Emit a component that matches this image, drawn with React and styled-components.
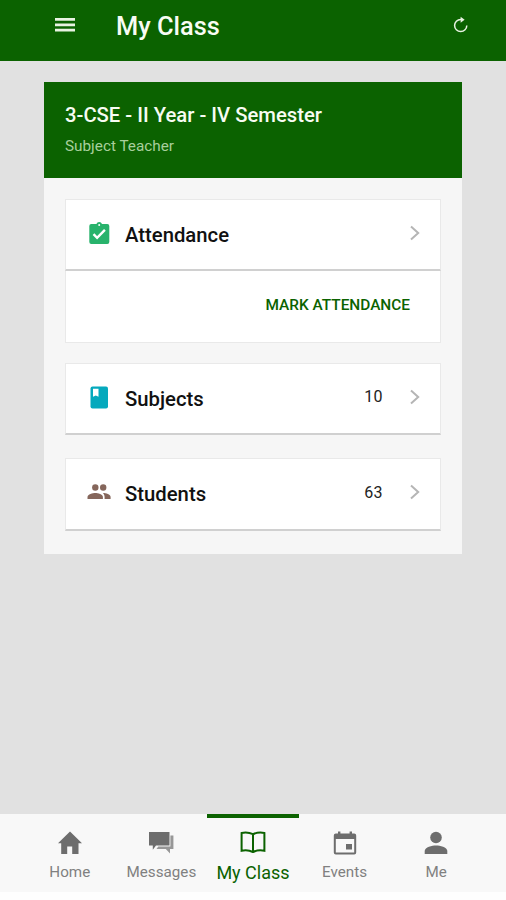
import React from 'react';
import styled, { createGlobalStyle } from 'styled-components';

const GlobalStyle = createGlobalStyle`
  * {
    box-sizing: border-box;
  }
  body {
    margin: 0;
    background: #fefefe;
    font-family: Roboto, sans-serif;
  }
`;

const Screen = styled.div`
  width: 506px;
  height: 900px;
  display: flex;
  flex-direction: column;
  overflow: hidden;
  svg {
    display: block;
    flex: none;
  }
`;

const Toolbar = styled.header`
  flex: none;
  height: 61px;
  padding: 0 37px 11px 54px;
  display: flex;
  align-items: center;
  background: #0b6200;
  color: #e9f3e2;
`;

const Title = styled.h1`
  flex: 1;
  margin: 2px 0 0 40px;
  font-size: 25.4px;
  line-height: 30px;
  font-weight: 500;
  color: #f8fcf3;
`;

const Content = styled.main`
  flex: 1;
  padding: 21px 44px 0;
  background: #e1e1e1;
`;

const ClassCard = styled.section`
  height: 472px;
  background: #f6f6f6;
`;

const ClassHeader = styled.div`
  height: 96px;
  padding: 20px 21px 0;
  background: #0b6200;
`;

const ClassName = styled.h2`
  margin: 0;
  font-size: 20.25px;
  line-height: 26px;
  font-weight: 500;
  color: #f8fcf3;
`;

const Role = styled.p`
  margin: 8px 0 0;
  font-size: 15.3px;
  line-height: 20px;
  color: #a8cf9c;
`;

const List = styled.div`
  padding: 21px 21px 0;
`;

const Item = styled.div`
  height: ${({ $height }) => $height || 72}px;
  margin-bottom: ${({ $gap }) => $gap}px;
  padding: 0 20px 4px 21px;
  display: flex;
  align-items: center;
  background: #fff;
  border: 1px solid #e9e9e9;
  border-bottom: 2px solid #d0d0d0;
`;

const Label = styled.span`
  flex: 1;
  margin: 4px 0 0 14px;
  font-size: 20.3px;
  font-weight: 500;
  color: #111;
`;

const Count = styled.span`
  margin-right: 27px;
  font-size: 16px;
  letter-spacing: 0.4px;
  color: #222;
`;

const Actions = styled.div`
  height: 72px;
  margin-bottom: 20px;
  padding: 0 30px 4px;
  display: flex;
  align-items: center;
  justify-content: flex-end;
  background: #fff;
  border: 1px solid #e9e9e9;
  border-top: 0;
`;

const MarkButton = styled.button`
  padding: 1px 0 0;
  border: 0;
  background: none;
  font: 500 15.4px Roboto, sans-serif;
  color: #0b6200;
`;

const TabBar = styled.nav`
  flex: none;
  height: 78px;
  margin-bottom: 8px;
  padding: 0 24px;
  display: grid;
  grid-template-columns: repeat(5, 1fr);
  background: #f8f8f8;
`;

const Tab = styled.div`
  padding-top: 12px;
  display: flex;
  flex-direction: column;
  align-items: center;
  border-top: 4px solid ${({ $active }) => ($active ? '#0b6200' : 'transparent')};
  color: ${({ $active }) => ($active ? '#0b6200' : '#6d6d6d')};
`;

const TabLabel = styled.span`
  margin-top: ${({ $active }) => ($active ? 6 : 5)}px;
  font-size: ${({ $active }) => ($active ? 18 : 15.2)}px;
  line-height: 22px;
  white-space: nowrap;
  color: ${({ $active }) => ($active ? '#0b6200' : '#808080')};
`;

const MenuIcon = () => (
  <svg width="22" height="16" viewBox="0 0 22 16" fill="currentColor">
    <path d="M1 1h20v2.8H1zM1 6.4h20v2.8H1zM1 11.8h20v2.8H1z" />
  </svg>
);

const RefreshIcon = () => (
  <svg width="16" height="18" viewBox="0 0 16 18" fill="none" stroke="currentColor" strokeWidth="1.5">
    <path d="M13.8 9.500A6.100 6.100 0 1 1 7.700 3.400h2" />
    <path d="M7.600 .8l4 2.900-4 3.100z" fill="currentColor" stroke="none" />
  </svg>
);

const ChevronIcon = () => (
  <svg width="10" height="16" viewBox="0 0 10 16" fill="none" stroke="#b5b5b5" strokeWidth="2">
    <path d="M1 1.5L8.2 8 1 14.5" />
  </svg>
);

const AttendanceIcon = () => (
  <svg width="24" height="24" viewBox="0 0 24 24">
    <path
      fill="#28b36c"
      d="M20.3 3h-5.300a3 3 0 0 0-5.600 0H4.300a2 2 0 0 0-2 2v16a2 2 0 0 0 2 2h16a2 2 0 0 0 2-2V5a2 2 0 0 0-2-2z"
    />
    <circle cx="12.2" cy="4" r="1" fill="#fff" />
    <path d="M6.500 13.200l3.600 3.600 7.800-8" fill="none" stroke="#fff" strokeWidth="2.4" />
  </svg>
);

const SubjectsIcon = () => (
  <svg width="24" height="24" viewBox="0 0 24 24">
    <rect x="3.5" y="1.500" width="17.500" height="22" rx="2" fill="#05a9bd" />
    <path d="M6 3.800h5.500v8L8.800 10.600 6 11.800z" fill="#fff" />
  </svg>
);

const StudentsIcon = () => (
  <svg width="24" height="24" viewBox="0 0 24 24" fill="#85665b">
    <circle cx="8.3" cy="7.5" r="3.2" />
    <circle cx="16.2" cy="7.5" r="3.2" />
    <path d="M.5 19v-2.1c0-2.6 5.3-4 7.8-4s7.6 1.4 7.6 4V19z" />
    <path d="M15.9 12.9c3 .1 7.7 1.4 7.7 4V19h-6v-2.1c0-1.8-.8-3-1.7-4z" />
  </svg>
);

const HomeIcon = () => (
  <svg width="28" height="26" viewBox="0 0 28 26" fill="currentColor">
    <path d="M14 1.5L2 13.3h3.200V24h6v-7.500h5V24h6.300V13.300H26z" />
  </svg>
);

const MessagesIcon = () => (
  <svg width="28" height="26" viewBox="0 0 28 26" fill="currentColor">
    <path d="M2 2h20.5v13.500H9l-3.200 4.200v-4.200H2z" />
    <path d="M23.400 5.500h3V19H23v4.500L18.800 19H9.500l1.800-2.500h12.100z" opacity=".7" />
  </svg>
);

const BookIcon = () => (
  <svg width="28" height="26" viewBox="0 0 28 26" fill="none" stroke="currentColor" strokeWidth="2">
    <path d="M14 4.2C10.3 2.5 6 2.3 2.6 3v17.7c3.6-.8 7.8-.5 11.4 1.3 3.6-1.8 7.8-2.1 11.4-1.3V3C22 2.3 17.7 2.5 14 4.2zM14 4.2V22" />
  </svg>
);

const EventsIcon = () => (
  <svg width="28" height="26" viewBox="0 0 28 26" fill="currentColor">
    <path
      fillRule="evenodd"
      d="M7 1.5h2.4v2h9.2v-2H21v2h2.2a2 2 0 0 1 2 2v17a2 2 0 0 1-2 2H4.8a2 2 0 0 1-2-2v-17a2 2 0 0 1 2-2H7zM4.8 9v13.5h18.4V9z"
    />
    <path d="M15 14h6v5.5h-6z" />
  </svg>
);

const PersonIcon = () => (
  <svg width="28" height="26" viewBox="0 0 28 26" fill="currentColor">
    <circle cx="14" cy="7.5" r="5.8" />
    <path d="M2.7 24v-3c0-3.9 7.5-5.5 11.3-5.5S25.3 17.1 25.3 21v3z" />
  </svg>
);

const tabs = [
  { name: 'Home', Icon: HomeIcon },
  { name: 'Messages', Icon: MessagesIcon },
  { name: 'My Class', Icon: BookIcon, active: true },
  { name: 'Events', Icon: EventsIcon },
  { name: 'Me', Icon: PersonIcon },
];

const App = () => {
  return (
    <Screen>
      <GlobalStyle />
      <Toolbar>
        <MenuIcon />
        <Title>My Class</Title>
        <RefreshIcon />
      </Toolbar>
      <Content>
        <ClassCard>
          <ClassHeader>
            <ClassName>3-CSE - II Year - IV Semester</ClassName>
            <Role>Subject Teacher</Role>
          </ClassHeader>
          <List>
            <Item $gap={0}>
              <AttendanceIcon />
              <Label>Attendance</Label>
              <ChevronIcon />
            </Item>
            <Actions>
              <MarkButton>MARK ATTENDANCE</MarkButton>
            </Actions>
            <Item $gap={23}>
              <SubjectsIcon />
              <Label>Subjects</Label>
              <Count>10</Count>
              <ChevronIcon />
            </Item>
            <Item $gap={0} $height={73}>
              <StudentsIcon />
              <Label>Students</Label>
              <Count>63</Count>
              <ChevronIcon />
            </Item>
          </List>
        </ClassCard>
      </Content>
      <TabBar>
        {tabs.map(({ name, Icon, active }) => (
          <Tab key={name} $active={active}>
            <Icon />
            <TabLabel $active={active}>{name}</TabLabel>
          </Tab>
        ))}
      </TabBar>
    </Screen>
  );
};

export default App;
